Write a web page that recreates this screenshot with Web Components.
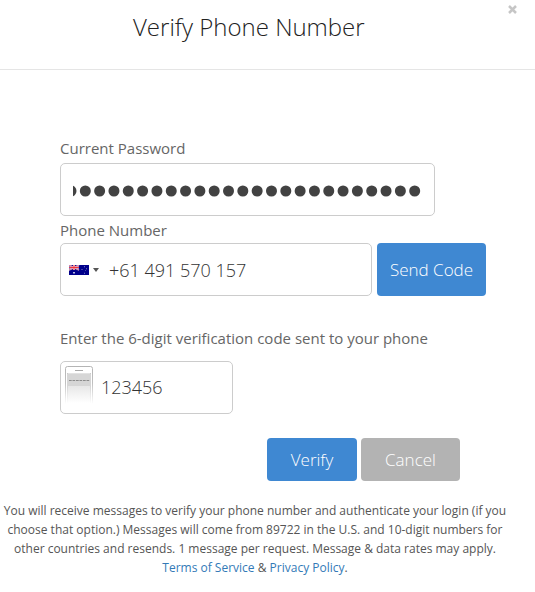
<!DOCTYPE html>
<html lang="en">
<head>
<meta charset="utf-8">
<title>Verify Phone Number</title>
<style>
body{margin:0;background:#fff;font-family:"Open Sans","Noto Sans",sans-serif;color:#666}
</style>
</head>
<body>
<verify-dialog></verify-dialog>
<script>
const define = (name, html) => {
  const template = document.createElement('template');
  template.innerHTML = html;
  customElements.define(name, class extends HTMLElement {
    constructor() {
      super();
      this.attachShadow({mode: 'open'}).append(template.content.cloneNode(true));
    }
  });
};

define('dialog-header', `
<style>
:host{display:grid;grid-template-columns:1fr;height:69px;border-bottom:1px solid #e5e5e5;box-sizing:content-box}
h1{grid-area:1/1;margin:10px 0 0 133px;font-weight:300;font-size:24px;line-height:34px;color:#222;white-space:nowrap}
svg{grid-area:1/1;justify-self:end;margin:5px 18px 0 0}
</style>
<h1><slot></slot></h1>
<svg width="9" height="9" viewBox="0 0 9 9"><path d="M1 1L8 8M8 1L1 8" stroke="#c6c6c6" stroke-width="2.5"/></svg>`);

define('field-label', `
<style>:host{display:block;font-size:15px;line-height:20px;white-space:nowrap;color:#666}</style>
<slot></slot>`);

define('field-box', `
<style>
:host{display:flex;align-items:center;box-sizing:border-box;height:53px;border:1px solid #ccc;border-radius:5px;background:#fff;font-size:18px;font-weight:300;color:#333;white-space:nowrap}
</style>
<slot></slot>`);

define('password-dots', `
<style>:host{display:block;margin:2px 0 0 12px;height:12px}svg{display:block}</style>
<svg width="350" height="12"><g fill="#424242"></g></svg>`);

define('flag-au', `
<style>:host{display:block;margin:0 0 0 8px}svg{display:block}</style>
<svg width="20" height="10" viewBox="0 0 20 10">
<rect width="20" height="10" fill="#00008b"/>
<path d="M0 0L10 5M10 0L0 5" stroke="#d9c9de" stroke-width="1.4"/>
<path d="M5 0V5M0 2.5H10" stroke="#fff" stroke-width="1.9"/>
<path d="M0 0L10 5M10 0L0 5" stroke="#e0405c" stroke-width=".6"/>
<path d="M5 0V5M0 2.5H10" stroke="#ef3340" stroke-width="1.1"/>
<path d="M4 7h2v1.5H4z" fill="#b8b8e0"/>
<path d="M15 1.3h1v1h-1zM12.5 4h1v1h-1zM17 3.3h1v1h-1zM15 7.7h1v1h-1zM16 5.2h.7v.7H16z" fill="#8080c4"/>
</svg>`);

define('caret-down', `
<style>:host{display:block;margin-left:4px}svg{display:block}</style>
<svg width="6" height="4"><path d="M0 0H6L3 4Z" fill="#555"/></svg>`);

define('phone-icon', `
<style>:host{display:block;margin:-5px 0 0 4px}svg{display:block}</style>
<svg width="28" height="38" viewBox="0 0 28 38">
<defs>
<linearGradient id="edge" gradientUnits="userSpaceOnUse" x1="0" y1="0" x2="0" y2="38"><stop offset="0" stop-color="#b4b4b4"/><stop offset=".45" stop-color="#c0c0c0"/><stop offset="1" stop-color="#fff"/></linearGradient>
<linearGradient id="screen" x1="0" y1="0" x2="0" y2="1"><stop offset="0" stop-color="#e2e2e2"/><stop offset=".4" stop-color="#e6e6e6"/><stop offset="1" stop-color="#fff"/></linearGradient>
</defs>
<path d="M.5 38V2.5Q.5.5 2.5.5H25.5Q27.5.5 27.5 2.5V38" fill="none" stroke="url(#edge)"/>
<rect x="2" y="7" width="24" height="30" fill="url(#screen)"/>
<path d="M2.5 7V37M25.5 7V37" stroke="url(#edge)" stroke-width=".6"/>
<path d="M10 4.5H18" stroke="#aaa"/>
<rect x="2" y="8" width="24" height="12" fill="#d6d6d6"/>
<path d="M4 14.5H24.2" stroke="#8c8c8c" stroke-width="1.2" stroke-dasharray="2.7 .8"/>
</svg>`);

define('action-button', `
<style>
:host{display:block}
button{display:block;box-sizing:border-box;width:var(--w);height:var(--h);padding:0;border:0;border-radius:4px;background:var(--bg,#3f88d2);color:#fff;font:300 17px/24px "Open Sans","Noto Sans",sans-serif}
:host(.send) button{padding-top:1px}
</style>
<button type="button"><slot></slot></button>`);

define('legal-note', `
<style>
:host{display:block;width:510px;padding-top:20px;font-size:12px;line-height:19px;text-align:center;color:#555;white-space:nowrap}
::slotted(a){color:#337ab7;text-decoration:none}
</style>
<slot></slot>`);

define('verify-dialog', `
<style>
:host{display:block;width:535px;height:592px;overflow:hidden}
form{margin:0;padding:68px 0 0 60px}
.row{display:flex;gap:5px}
.pass{width:375px;margin:5px 0 4px}
.phone{width:312px}
.phonelabel{margin-bottom:3px}
.codelabel{margin:32px 0 13px}
.code{width:173px}
.number{margin:0 0 0 10px}
.digits{margin:0 0 2px 8px}
.actions{display:flex;gap:4px;margin:24px 0 0 207px}
.send{--w:109px;--h:53px}.verify{--w:90px;--h:43px}.cancel{--w:99px;--h:43px;--bg:#b3b3b3}
</style>
<dialog-header>Verify Phone Number</dialog-header>
<form>
<field-label>Current Password</field-label>
<field-box class="pass"><password-dots></password-dots></field-box>
<field-label class="phonelabel">Phone Number</field-label>
<div class="row"><field-box class="phone"><flag-au></flag-au><caret-down></caret-down><span class="number">+61 491 570 157</span></field-box><action-button class="send">Send Code</action-button></div>
<field-label class="codelabel">Enter the 6-digit verification code sent to your phone</field-label>
<field-box class="code"><phone-icon></phone-icon><span class="digits">123456</span></field-box>
<div class="actions"><action-button class="verify">Verify</action-button><action-button class="cancel">Cancel</action-button></div>
</form>
<legal-note>You will receive messages to verify your phone number and authenticate your login (if you<br>choose that option.) Messages will come from 89722 in the U.S. and 10-digit numbers for<br>other countries and resends. 1 message per request. Message &amp; data rates may apply.<br><a href="#">Terms of Service</a> &amp; <a href="#">Privacy Policy</a>.</legal-note>`);

const dots = document.querySelector('verify-dialog').shadowRoot.querySelector('password-dots').shadowRoot.querySelector('g');
for (let i = 0; i < 25; i++) {
  const dot = document.createElementNS('http://www.w3.org/2000/svg', 'circle');
  dot.setAttribute('cx', (-2 + i * 14.32).toFixed(2));
  dot.setAttribute('cy', 6);
  dot.setAttribute('r', 5.5);
  dots.append(dot);
}
</script>
</body>
</html>
